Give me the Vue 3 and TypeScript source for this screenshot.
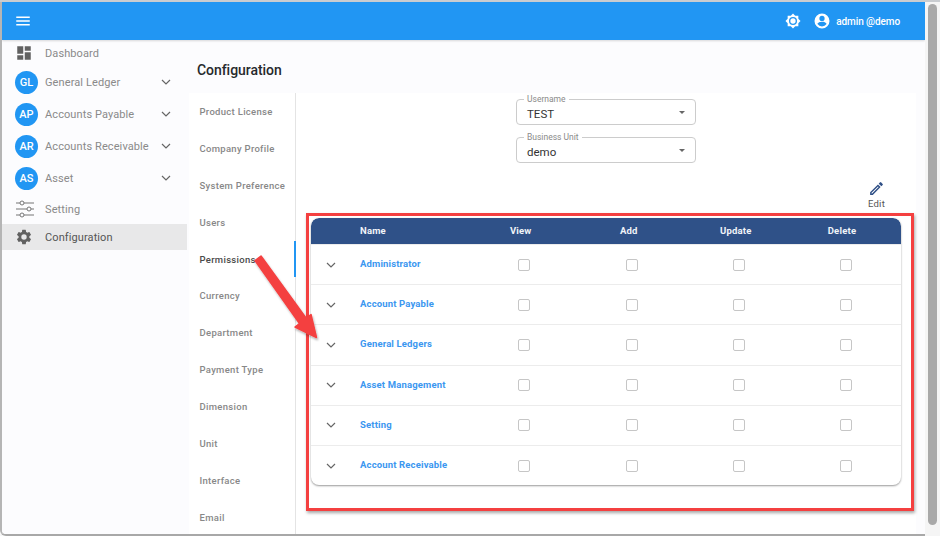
<script setup lang="ts">
const menu = [
  { badge: 'GL', label: 'General Ledger' },
  { badge: 'AP', label: 'Accounts Payable' },
  { badge: 'AR', label: 'Accounts Receivable' },
  { badge: 'AS', label: 'Asset' },
]
const tabs = ['Product License', 'Company Profile', 'System Preference', 'Users', 'Permissions', 'Currency', 'Department', 'Payment Type', 'Dimension', 'Unit', 'Interface', 'Email']
const rows = ['Administrator', 'Account Payable', 'General Ledgers', 'Asset Management', 'Setting', 'Account Receivable']
const perms = ['View', 'Add', 'Update', 'Delete']
const selects = [
  { label: 'Username', value: 'TEST' },
  { label: 'Business Unit', value: 'demo' },
]
</script>

<template>
  <div class="frame">
    <div class="window">
      <header class="appbar">
        <svg class="menu-icon" viewBox="0 0 24 24" width="18" height="18"><path d="M3 6h18v2H3zM3 11h18v2H3zM3 16h18v2H3z" fill="#fff" /></svg>
        <div class="spacer"></div>
        <svg class="bright" viewBox="0 0 24 24" width="16" height="16"><path fill="#fff" d="M12 8a4 4 0 1 0 0 8 4 4 0 0 0 0-8Zm8 7.31L23.31 12 20 8.69V4h-4.69L12 .69 8.69 4H4v4.69L.69 12 4 15.31V20h4.69L12 23.31 15.31 20H20v-4.69ZM12 18a6 6 0 1 1 0-12 6 6 0 0 1 0 12Z" /></svg>
        <svg class="account" viewBox="0 0 24 24" width="18" height="18"><path fill="#fff" d="M12 2a10 10 0 1 0 0 20 10 10 0 0 0 0-20Zm0 3a3.5 3.5 0 1 1 0 7 3.5 3.5 0 0 1 0-7Zm0 14.2a7.2 7.2 0 0 1-6-3.22c.03-2 4-3.08 6-3.08s5.97 1.09 6 3.08a7.2 7.2 0 0 1-6 3.22Z" /></svg>
        <span class="user">admin @demo</span>
      </header>

      <div class="body">
        <nav class="sidebar">
          <div class="nav-item first">
            <span class="nav-icon"><svg viewBox="0 0 24 24" width="18" height="18"><path fill="#616161" d="M3 3h8v10H3zM13 3h8v6h-8zM13 11h8v10h-8zM3 15h8v6H3z" /></svg></span>
            <span class="nav-label">Dashboard</span>
          </div>
          <div v-for="m in menu" :key="m.badge" class="nav-item group">
            <span class="badge">{{ m.badge }}</span>
            <span class="nav-label">{{ m.label }}</span>
            <svg class="nav-chevron" viewBox="0 0 24 24" width="16" height="16"><path d="M6 9l6 6 6-6" fill="none" stroke="#666" stroke-width="1.8" /></svg>
          </div>
          <div class="nav-item setting">
            <span class="nav-icon"><svg viewBox="0 0 20 18" width="20" height="18"><g fill="none" stroke="#757575" stroke-width="1"><path d="M1 3h4M9 3h10M1 9h11M16 9h3M1 15h4M9 15h10" /><circle cx="7" cy="3" r="2" /><circle cx="14" cy="9" r="2" /><circle cx="7" cy="15" r="2" /></g></svg></span>
            <span class="nav-label">Setting</span>
          </div>
          <div class="nav-item active">
            <span class="nav-icon"><svg viewBox="0 0 24 24" width="18" height="18"><path fill="#616161" d="M19.14 12.94a7.1 7.1 0 0 0 0-1.88l2.03-1.58a.5.5 0 0 0 .12-.64l-1.92-3.32a.5.5 0 0 0-.6-.22l-2.39.96a7 7 0 0 0-1.63-.94l-.36-2.54a.5.5 0 0 0-.49-.42h-3.84a.5.5 0 0 0-.49.42l-.36 2.54a7 7 0 0 0-1.63.94l-2.39-.96a.5.5 0 0 0-.6.22L2.67 8.84a.5.5 0 0 0 .12.64l2.03 1.58a7.1 7.1 0 0 0 0 1.88l-2.03 1.58a.5.5 0 0 0-.12.64l1.92 3.32c.13.22.39.3.6.22l2.39-.96c.5.38 1.05.7 1.63.94l.36 2.54c.04.24.25.42.49.42h3.84c.24 0 .45-.18.49-.42l.36-2.54a7 7 0 0 0 1.63-.94l2.39.96c.22.08.47 0 .6-.22l1.92-3.32a.5.5 0 0 0-.12-.64l-2.03-1.58ZM12 15.6a3.6 3.6 0 1 1 0-7.2 3.6 3.6 0 0 1 0 7.2Z" /></svg></span>
            <span class="nav-label">Configuration</span>
          </div>
        </nav>

        <main class="main">
          <h1 class="title">Configuration</h1>
          <div class="panel">
            <div class="tabs">
              <div v-for="t in tabs" :key="t" class="tab" :class="{ on: t === 'Permissions' }">{{ t }}</div>
            </div>
            <section class="content">
              <div class="selects">
                <div v-for="s in selects" :key="s.label" class="select">
                  <span class="select-label">{{ s.label }}</span>
                  <span class="select-value">{{ s.value }}</span>
                  <span class="caret"></span>
                </div>
              </div>
              <div class="edit-row">
                <div class="edit">
                  <svg viewBox="0 0 24 24" width="17" height="17"><path fill="#2f4f86" d="M14.06 9l.94.94L5.92 19H5v-.92L14.06 9Zm3.6-6c-.25 0-.51.1-.7.29l-1.83 1.83 3.75 3.75 1.83-1.83a1 1 0 0 0 0-1.41l-2.34-2.34a1 1 0 0 0-.71-.29Zm-3.6 3.19L3 17.25V21h3.75L17.81 9.94l-3.75-3.75Z" /></svg>
                  <span>Edit</span>
                </div>
              </div>
              <div class="table">
                <div class="thead">
                  <span></span>
                  <span class="th-name">Name</span>
                  <span v-for="p in perms" :key="p" class="th">{{ p }}</span>
                </div>
                <div v-for="r in rows" :key="r" class="tr">
                  <svg class="chev" viewBox="0 0 24 24" width="16" height="16"><path d="M6 9l6 6 6-6" fill="none" stroke="#666" stroke-width="1.8" /></svg>
                  <a class="row-name">{{ r }}</a>
                  <span v-for="p in perms" :key="p" class="cell"><i class="check"></i></span>
                </div>
              </div>
            </section>
          </div>
        </main>
      </div>
    </div>
    <aside class="scrollbar"><div class="thumb"></div></aside>

    <div class="red-box"></div>
    <svg class="arrow" viewBox="0 0 80 100" width="80" height="100">
      <defs>
        <filter id="arrow-shadow" x="-20%" y="-20%" width="150%" height="150%"><feDropShadow dx="1" dy="2" stdDeviation="1.2" flood-color="#000" flood-opacity=".3" /></filter>
      </defs>
      <path filter="url(#arrow-shadow)" fill="#f44040" stroke="#f44040" stroke-width="1.5" stroke-linejoin="round" d="M5 8.5L11 4 56 66 61 62.5 66.5 85.5 45 75 49.5 71.5Z" />
    </svg>
  </div>
</template>

<style>
html, body { margin: 0; padding: 0; background: #fff; overflow: hidden; }
</style>

<style scoped>
.frame { position: relative; width: 940px; height: 536px; display: flex; overflow: hidden; background: #f7f7f7; font-family: Roboto, "Liberation Sans", sans-serif; border-top: 2px solid #c9ccd0; box-sizing: border-box; }
.window { flex: 1; min-width: 0; display: flex; flex-direction: column; border-left: 2px solid #b5b5b5; border-bottom: 2px solid #a8a8a8; border-bottom-left-radius: 6px; background: #fff; overflow: hidden; }
.appbar { height: 38px; flex: none; background: #2196f3; display: flex; align-items: center; padding: 0 25px 0 12px; color: #fff; box-shadow: 0 1px 2px rgba(0,0,0,.15); z-index: 1; }
.spacer { flex: 1; }
.bright { margin-right: 12px; }
.account { margin-right: 5px; }
.user { font-size: 10px; font-weight: 500; letter-spacing: -.08px; }
.body { flex: 1; display: flex; min-height: 0; background: #fcfcfe; }
.sidebar { width: 185px; flex: none; }
.nav-item { display: flex; align-items: center; color: #8a8a8a; font-size: 11px; letter-spacing: .1px; padding-left: 13px; box-sizing: border-box; }
.nav-item.first { height: 26px; }
.nav-item.group { height: 32px; }
.nav-item.setting { height: 30px; }
.nav-item.active { height: 26px; background: #e8e8e9; color: #555; }
.nav-icon { width: 30px; display: flex; align-items: center; flex: none; }
.badge { width: 23px; height: 23px; margin-right: 7px; border-radius: 50%; background: #2196f3; color: #fff; font-size: 11px; font-weight: 500; letter-spacing: 0; display: flex; align-items: center; justify-content: center; flex: none; }
.nav-label { flex: 1; }
.nav-chevron { margin-right: 13px; }
.main { flex: 1; min-width: 0; display: flex; flex-direction: column; }
.title { margin: 0; height: 53px; box-sizing: border-box; padding: 20px 0 0 10px; font-size: 14px; line-height: 20px; font-weight: 500; letter-spacing: -.05px; color: #26292c; }
.panel { flex: 1; display: flex; min-height: 0; margin: 0 9px 0 2px; background: #fff; }
.tabs { width: 107px; flex: none; border-right: 1px solid #e4e4e4; box-sizing: border-box; }
.tab { height: 36.9px; display: flex; align-items: center; padding-left: 10.5px; font-size: 9.5px; font-weight: 500; letter-spacing: .3px; color: #888; box-sizing: border-box; position: relative; }
.tab.on { color: #4a4a4a; }
.tab.on::after { content: ""; position: absolute; right: -1px; top: 0; bottom: 0; width: 2px; background: #2196f3; }
.content { flex: 1; min-width: 0; display: flex; flex-direction: column; padding: 6px 15px 0 15px; }
.selects { display: flex; flex-direction: column; align-items: center; gap: 12px; }
.select { position: relative; width: 180px; height: 26px; border: 1px solid #ccc; border-radius: 4px; box-sizing: border-box; display: flex; align-items: center; padding-left: 10px; padding-top: 3px; font-size: 11.5px; color: #333; }
.select-label { position: absolute; top: -6px; left: 7px; padding: 0 3px; background: #fff; font-size: 8.5px; line-height: 10px; color: #8a8a8a; }
.caret { position: absolute; right: 10px; top: 11px; width: 0; height: 0; border: 3px solid transparent; border-top: 3.5px solid #666; border-bottom: 0; }
.edit-row { display: flex; justify-content: flex-end; margin-top: 17px; padding-right: 16px; height: 30px; }
.edit { display: flex; flex-direction: column; align-items: center; color: #555; font-size: 9.5px; line-height: 11px; letter-spacing: .2px; }
.edit svg { margin-bottom: 1px; }
.table { width: 590px; margin-top: 8px; border-radius: 8px; box-shadow: 0 1px 2px rgba(0,0,0,.4); background: #fff; overflow: hidden; }
.thead, .tr { display: grid; grid-template-columns: 49px 110px 108.5px 107.5px 106.5px 106px 2px; align-items: center; }
.thead { height: 26px; background: #2f5188; color: #f1f4f8; font-size: 9.5px; font-weight: 700; letter-spacing: .2px; border-radius: 8px 8px 0 0; }
.th-name, .th { padding-bottom: 1px; }
.th { text-align: center; padding-right: 7px; }
.tr { height: 40.2px; border-top: 1px solid #ececec; box-sizing: border-box; }
.tr:first-of-type { border-top: 0; }
.chev { margin-left: 12px; }
.row-name { font-size: 9.5px; font-weight: 700; letter-spacing: .15px; color: #3b97f0; white-space: nowrap; padding-bottom: 2px; }
.cell { display: flex; justify-content: center; }
.check { width: 12px; height: 12px; box-sizing: border-box; border: 1.5px solid #c6c6c6; border-radius: 2px; }
.scrollbar { width: 15px; flex: none; background: #f5f5f5; display: flex; justify-content: center; padding-top: 2px; padding-bottom: 11px; box-sizing: border-box; }
.thumb { width: 9px; height: 100%; background: #a9a9a9; border-radius: 5px; }
.red-box { position: absolute; left: 306px; top: 211px; width: 608px; height: 298px; box-sizing: border-box; border: 3px solid #f44040; box-shadow: 1px 2px 3px rgba(0,0,0,.35); pointer-events: none; }
.arrow { position: absolute; left: 250px; top: 250px; pointer-events: none; }
</style>
